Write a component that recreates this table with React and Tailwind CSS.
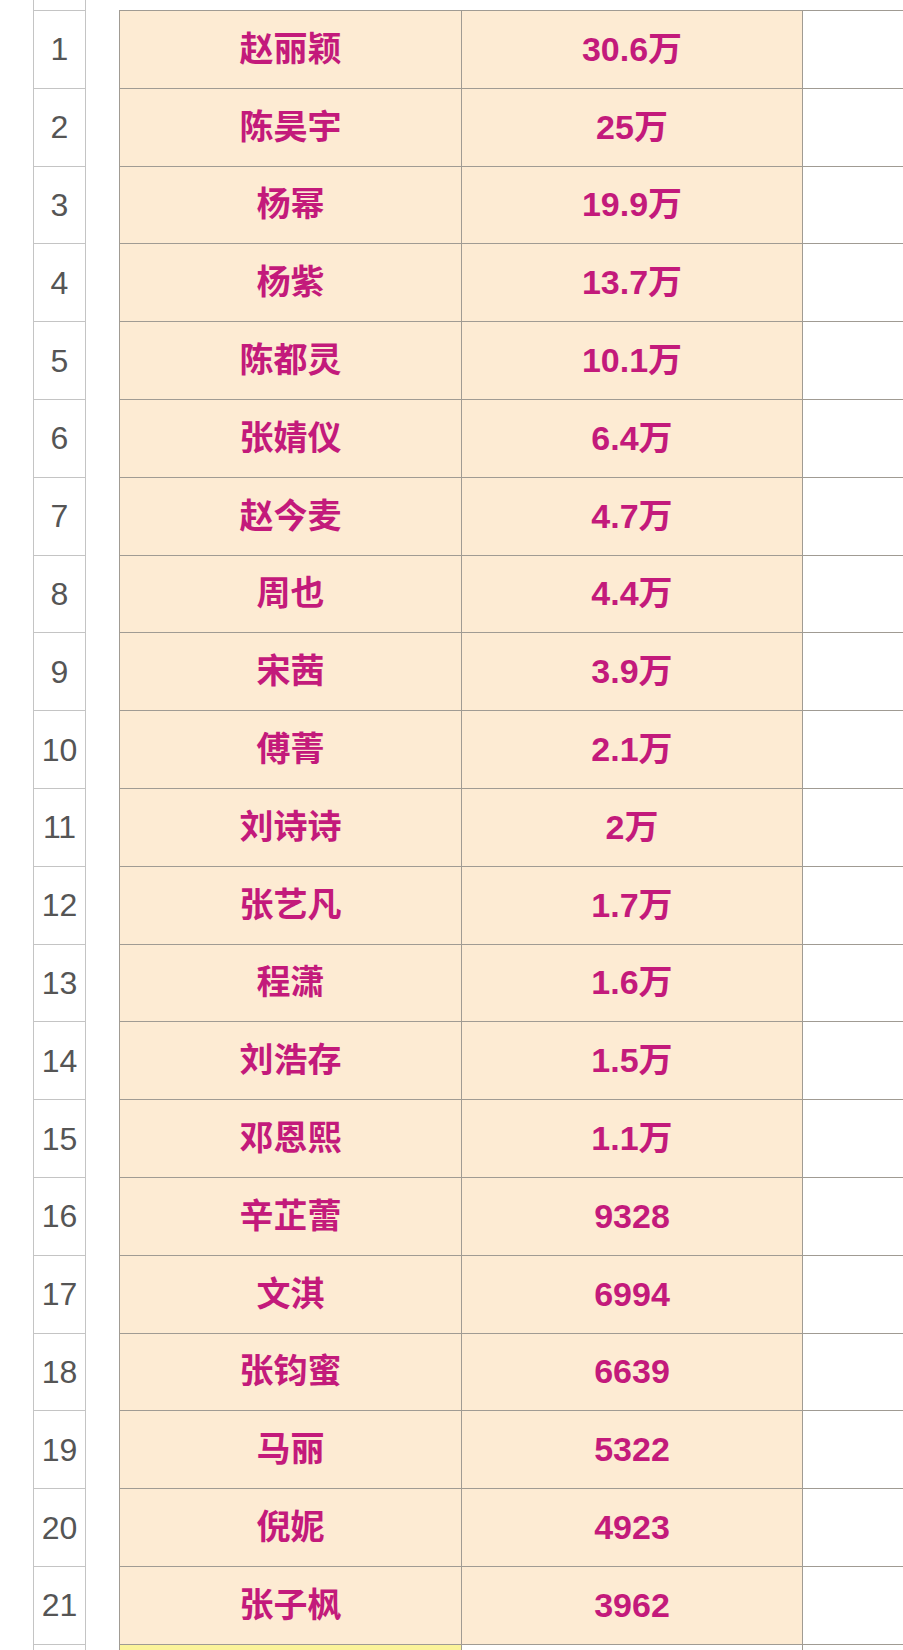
const ROWS = [
  ["赵丽颖", "30.6万"],
  ["陈昊宇", "25万"],
  ["杨幂", "19.9万"],
  ["杨紫", "13.7万"],
  ["陈都灵", "10.1万"],
  ["张婧仪", "6.4万"],
  ["赵今麦", "4.7万"],
  ["周也", "4.4万"],
  ["宋茜", "3.9万"],
  ["傅菁", "2.1万"],
  ["刘诗诗", "2万"],
  ["张艺凡", "1.7万"],
  ["程潇", "1.6万"],
  ["刘浩存", "1.5万"],
  ["邓恩熙", "1.1万"],
  ["辛芷蕾", "9328"],
  ["文淇", "6994"],
  ["张钧蜜", "6639"],
  ["马丽", "5322"],
  ["倪妮", "4923"],
  ["张子枫", "3962"],
];

const FONT = { fontFamily: '"Liberation Sans", "Noto Sans CJK SC", sans-serif' };

export default function App() {
  return (
    <div className="w-[903px] h-[1650px] overflow-hidden bg-white" style={FONT}>
      {/* partial row above */}
      <div className="flex h-[11px]">
        <div className="w-[33px] bg-white" />
        <div className="w-[53px] border-x border-b border-[#c4c4c4] bg-white" />
        <div className="w-[33px] bg-white" />
        <div className="flex-1 border-b border-[#a09b93] bg-white" />
      </div>

      {ROWS.map(([name, value], i) => (
        <div key={i} className="flex h-[77.8px]">
          <div className="w-[33px] bg-white" />
          <div className="w-[53px] border-x border-b border-[#c4c4c4] bg-white flex items-center justify-center text-[32px] text-[#555555]">
            {i + 1}
          </div>
          <div className="w-[33px] bg-white" />
          <div className="w-[342px] border-l border-b border-[#a09b93] bg-[#fdebd3] flex items-center justify-center text-[34px] font-bold text-[#c31a7b]">
            {name}
          </div>
          <div className="w-[342px] border-x border-b border-[#a09b93] bg-[#fdebd3] flex items-center justify-center text-[34px] font-bold text-[#c31a7b]">
            {value}
          </div>
          <div className="flex-1 border-b border-[#a09b93] bg-white" />
        </div>
      ))}

      {/* next row, cut off */}
      <div className="flex h-[40px]">
        <div className="w-[33px] bg-white" />
        <div className="w-[53px] border-x border-[#c4c4c4] bg-white" />
        <div className="w-[33px] bg-white" />
        <div className="w-[342px] border-l border-[#a09b93] bg-[#fbf39a]" />
        <div className="w-[342px] border-x border-[#a09b93] bg-white" />
        <div className="flex-1 bg-white" />
      </div>
    </div>
  );
}
